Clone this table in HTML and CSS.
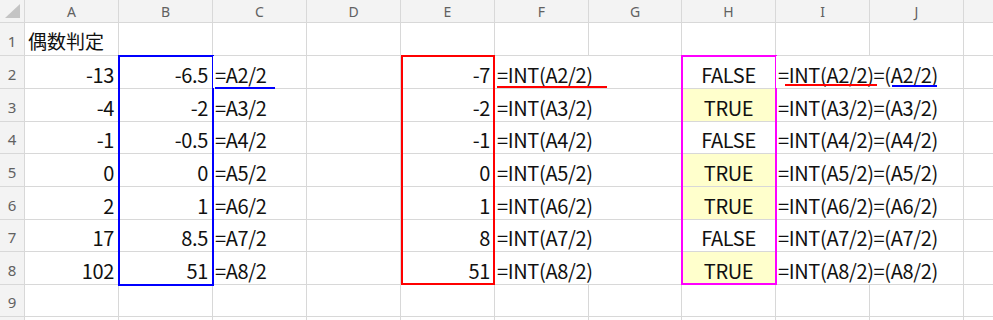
FILE: index.html
```html
<!DOCTYPE html>
<html lang="ja">
<head>
<meta charset="utf-8">
<title>偶数判定</title>
<link rel="stylesheet" href="styles.css">
</head>
<body>
<div class="stack">
  <div class="sheet">
    <div class="corner"><svg width="24" height="22" viewBox="0 0 24 22"><polygon points="5,18 20,18 20,4" fill="#c4c4c4"/></svg></div>
    <div class="ch">A</div><div class="ch">B</div><div class="ch">C</div><div class="ch">D</div><div class="ch">E</div><div class="ch">F</div><div class="ch">G</div><div class="ch">H</div><div class="ch">I</div><div class="ch">J</div><div class="ch"></div>

    <div class="rh">1</div><div class="c l jp">偶数判定</div><div class="c"></div><div class="c"></div><div class="c"></div><div class="c"></div><div class="c"></div><div class="c"></div><div class="c"></div><div class="c"></div><div class="c"></div><div class="c"></div>

    <div class="rh">2</div><div class="c r">-13</div><div class="c r">-6.5</div><div class="c l u-wrap">=A2/2<span class="ul ul-c2"></span></div><div class="c"></div><div class="c r">-7</div><div class="c l span2 u-wrap">=INT(A2/2)<span class="ul ul-f2"></span></div><div class="c m">FALSE</div><div class="c l span2 u-wrap">=INT(A2/2)=(A2/2)<span class="ul ul-i2a"></span><span class="ul ul-i2b"></span></div><div class="c"></div>

    <div class="rh">3</div><div class="c r">-4</div><div class="c r">-2</div><div class="c l">=A3/2</div><div class="c"></div><div class="c r">-2</div><div class="c l span2">=INT(A3/2)</div><div class="c m fill">TRUE</div><div class="c l span2">=INT(A3/2)=(A3/2)</div><div class="c"></div>

    <div class="rh">4</div><div class="c r">-1</div><div class="c r">-0.5</div><div class="c l">=A4/2</div><div class="c"></div><div class="c r">-1</div><div class="c l span2">=INT(A4/2)</div><div class="c m">FALSE</div><div class="c l span2">=INT(A4/2)=(A4/2)</div><div class="c"></div>

    <div class="rh">5</div><div class="c r">0</div><div class="c r">0</div><div class="c l">=A5/2</div><div class="c"></div><div class="c r">0</div><div class="c l span2">=INT(A5/2)</div><div class="c m fill">TRUE</div><div class="c l span2">=INT(A5/2)=(A5/2)</div><div class="c"></div>

    <div class="rh">6</div><div class="c r">2</div><div class="c r">1</div><div class="c l">=A6/2</div><div class="c"></div><div class="c r">1</div><div class="c l span2">=INT(A6/2)</div><div class="c m fill">TRUE</div><div class="c l span2">=INT(A6/2)=(A6/2)</div><div class="c"></div>

    <div class="rh">7</div><div class="c r">17</div><div class="c r">8.5</div><div class="c l">=A7/2</div><div class="c"></div><div class="c r">8</div><div class="c l span2">=INT(A7/2)</div><div class="c m">FALSE</div><div class="c l span2">=INT(A7/2)=(A7/2)</div><div class="c"></div>

    <div class="rh">8</div><div class="c r">102</div><div class="c r">51</div><div class="c l">=A8/2</div><div class="c"></div><div class="c r">51</div><div class="c l span2">=INT(A8/2)</div><div class="c m fill">TRUE</div><div class="c l span2">=INT(A8/2)=(A8/2)</div><div class="c"></div>

    <div class="rh">9</div><div class="c"></div><div class="c"></div><div class="c"></div><div class="c"></div><div class="c"></div><div class="c"></div><div class="c"></div><div class="c"></div><div class="c"></div><div class="c"></div><div class="c"></div>

    <div class="rh"></div><div class="c"></div><div class="c"></div><div class="c"></div><div class="c"></div><div class="c"></div><div class="c"></div><div class="c"></div><div class="c"></div><div class="c"></div><div class="c"></div><div class="c"></div>
  </div>

  <div class="overlay">
    <div class="box box-blue"></div>
    <div class="box box-red"></div>
    <div class="box box-magenta"></div>
  </div>
</div>
</body>
</html>
```

FILE: styles.css
```css
html, body {
  margin: 0;
  padding: 0;
  background: #ffffff;
}

.stack {
  display: grid;
  width: 993px;
  height: 320px;
  overflow: hidden;
}

.stack > .sheet,
.stack > .overlay {
  grid-area: 1 / 1;
}

.sheet,
.overlay {
  display: grid;
  grid-template-columns: 24px 93px 93px 93px 93px 93px 93px 92px 93px 93px 93px 1fr;
  grid-template-rows: 22px 32px 32px 32px 31px 32px 32px 31px 32px 31px 1fr;
  gap: 1px;
  height: 320px;
}

.sheet {
  background: #d8d8d8;
  font-family: "Noto Sans CJK JP", "Noto Sans", sans-serif;
  font-size: 20px;
  letter-spacing: -0.35px;
  color: #111111;
}

.overlay {
  pointer-events: none;
}

.corner {
  background: #f3f3f3;
  display: flex;
}

.ch {
  background: #f3f3f3;
  color: #616161;
  font-family: "Noto Sans", "Liberation Sans", sans-serif;
  font-size: 14px;
  letter-spacing: 0;
  display: flex;
  align-items: center;
  justify-content: center;
  padding-top: 1px;
}

.rh {
  background: #f3f3f3;
  color: #616161;
  font-family: "Noto Sans", "Liberation Sans", sans-serif;
  font-size: 15px;
  letter-spacing: 0;
  display: flex;
  align-items: center;
  justify-content: center;
  padding-top: 3px;
  overflow: hidden;
}

.c {
  background: #ffffff;
  display: flex;
  align-items: flex-end;
  line-height: 24px;
  padding: 0 2px 1px 2px;
  white-space: nowrap;
  min-width: 0;
}

.r { justify-content: flex-end; padding-right: 4px; }
.l { justify-content: flex-start; }
.m { justify-content: center; }

.jp {
  font-size: 19px;
  letter-spacing: 0;
  padding-left: 3px;
  padding-bottom: 2px;
}

.fill { background: #ffffcc; }

.span2 { grid-column: span 2; }

.u-wrap { position: relative; }

.ul {
  position: absolute;
  height: 2px;
}

.ul-c2 { left: 2px; width: 60px; top: 31px; background: #0000ff; }
.ul-f2 { left: 2px; width: 110px; top: 30px; background: #ff0000; }
.ul-i2a { left: 9px; width: 92px; top: 28px; background: #ff0000; }
.ul-i2b { left: 116px; width: 45px; top: 29px; background: #0000ff; }

.box {
  grid-row: 3 / 10;
  border: 2px solid;
}

.box-blue {
  grid-column: 3;
  border-color: #0000ff;
  margin: -1px -2px -2px -1px;
}

.box-red {
  grid-column: 6;
  border-color: #ff0000;
  margin: -1px -1px -1px 0;
}

.box-magenta {
  grid-column: 9;
  border-color: #ff00ff;
  margin: -1px -2px -1px -1px;
}
```
